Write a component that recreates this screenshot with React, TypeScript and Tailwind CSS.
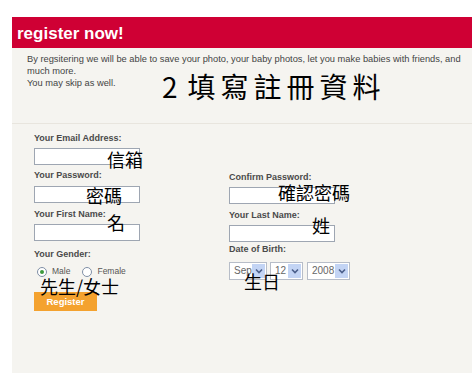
const cjk = { fontFamily: '"Noto Sans CJK TC", "Noto Sans CJK SC", sans-serif' };

const Label: React.FC<{ text: string; className?: string }> = ({ text, className }) => (
  <div className={`h-[11px] text-[9px] leading-[11px] font-bold text-[#4a4a4a] whitespace-nowrap ${className ?? ''}`}>
    {text}
  </div>
);

const Note: React.FC<{ text: string; className: string }> = ({ text, className }) => (
  <span
    className={`absolute text-[18px] leading-none text-black whitespace-nowrap ${className}`}
    style={cjk}
  >
    {text}
  </span>
);

const Input: React.FC<{ className?: string; children?: React.ReactNode }> = ({ className, children }) => (
  <div className={`relative w-[106px] h-[17px] bg-white border border-[#9ea6b2] ${className ?? ''}`}>
    {children}
  </div>
);

const Select: React.FC<{ value: string; width: string }> = ({ value, width }) => (
  <div className={`flex items-center h-[18px] ${width} bg-white border border-[#b7bdc8] p-[1px]`}>
    <span className="flex-1 pl-[3px] text-[10px] leading-none text-[#666]">{value}</span>
    <span className="flex items-center justify-center w-[13px] h-full bg-[#c3d4f4]">
      <svg width="8" height="6" viewBox="0 0 8 6">
        <path d="M1 1.5 L4 4.5 L7 1.5" fill="none" stroke="#4b5f8a" strokeWidth="1.6" />
      </svg>
    </span>
  </div>
);

const Radio: React.FC<{ checked?: boolean; label: string }> = ({ checked, label }) => (
  <div className="flex items-center gap-[5px]">
    <span className="flex items-center justify-center w-[10px] h-[10px] rounded-full bg-white border border-[#7f8fa6]">
      {checked && <span className="w-[4px] h-[4px] rounded-full bg-[#3e9a3e]" />}
    </span>
    <span className="text-[8.5px] leading-none text-[#555]">{label}</span>
  </div>
);

export default function App() {
  return (
    <div
      className="w-[476px] h-[373px] overflow-hidden bg-white pt-[17px] pl-[12px]"
      style={{ fontFamily: '"Liberation Sans", Arial, sans-serif' }}
    >
      <div className="flex flex-col w-[460px] h-[356px] bg-[#f5f4f0]">
        <div className="h-[31px] bg-[#cf0034] pl-[5px] pt-[5px]">
          <span className="text-[17px] leading-[20px] font-bold text-white">register now!</span>
        </div>

        <div className="relative h-[76px] border-b border-[#e8e5de] pl-[15px] pt-[5px] text-[9.3px] leading-[12px] text-[#444] whitespace-nowrap">
          By regsitering we will be able to save your photo, your baby photos, let you make babies with friends, and
          <br />
          much more.
          <br />
          You may skip as well.
          <span className="absolute left-[150px] top-[24px] text-[28px] leading-none text-black tracking-[5px]" style={cjk}>
            2<span className="ml-[5px]">填寫註冊資料</span>
          </span>
        </div>

        <div className="flex flex-1 pl-[22px]">
          <div className="flex flex-col w-[195px] pt-[9px]">
            <Label text="Your Email Address:" />
            <Input className="mt-[4px]">
              <Note text="信箱" className="left-[72px] top-[1px]" />
            </Input>
            <Label text="Your Password:" className="mt-[5px]" />
            <Input className="mt-[5px]">
              <Note text="密碼" className="left-[51px] top-[-1px]" />
            </Input>
            <Label text="Your First Name:" className="mt-[6px]" />
            <Input className="mt-[4px]">
              <Note text="名" className="left-[72px] top-[-12px]" />
            </Input>
            <Label text="Your Gender:" className="mt-[8px]" />
            <div className="relative flex items-center gap-[12px] h-[13px] mt-[5px] pl-[3px]">
              <Radio checked label="Male" />
              <Radio label="Female" />
              <Note text="先生/女士" className="left-[6px] top-[12px]" />
            </div>
            <button className="mt-[14px] w-[63px] h-[19px] bg-[#f4a22f] text-white text-[9.5px] font-bold leading-none">
              Register
            </button>
          </div>

          <div className="flex flex-col pt-[48px]">
            <Label text="Confirm Password:" />
            <Input className="mt-[4px]">
              <Note text="確認密碼" className="left-[48px] top-[-5px]" />
            </Input>
            <Label text="Your Last Name:" className="mt-[6px]" />
            <Input className="mt-[4px]">
              <Note text="姓" className="left-[82px] top-[-10px]" />
            </Input>
            <Label text="Date of Birth:" className="mt-[2px]" />
            <div className="relative flex gap-[3px] mt-[7px]">
              <Select value="Sep" width="w-[38px]" />
              <Select value="12" width="w-[33px]" />
              <div className="ml-[1px]">
                <Select value="2008" width="w-[43px]" />
              </div>
              <Note text="生日" className="left-[15px] top-[10px]" />
            </div>
          </div>
        </div>
      </div>
    </div>
  );
}
